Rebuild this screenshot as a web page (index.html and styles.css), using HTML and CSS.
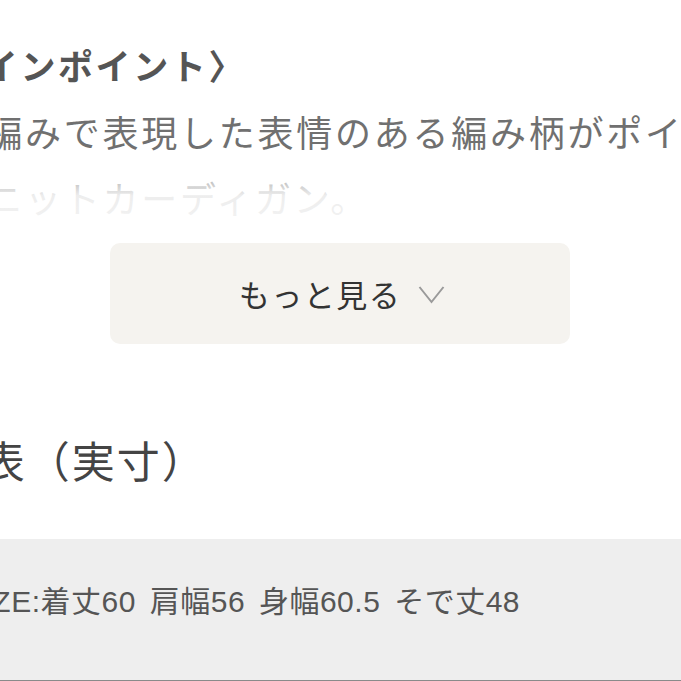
FILE: index.html
```html
<!DOCTYPE html>
<html lang="ja">
<head>
<meta charset="utf-8">
<title>商品説明</title>
<link rel="stylesheet" href="styles.css">
</head>
<body>
<main class="page">
  <section class="point">
    <h2 class="point-title">〈デザインポイント〉</h2>
    <p class="desc">アラン編みで表現した表情のある編み柄がポイ<br>ントのニットカーディガン。</p>
    <button class="more" type="button">
      <span class="more-label">もっと見る</span>
      <svg class="more-icon" width="27" height="19" viewBox="0 0 27 19" aria-hidden="true">
        <path d="M1.5 2 L13.5 17 L25.5 2" fill="none" stroke="#9a9a9a" stroke-width="2"/>
      </svg>
    </button>
  </section>
  <section class="size">
    <h2 class="size-title">サイズ表（実寸）</h2>
    <div class="size-box">SIZE:着丈60 肩幅56 身幅60.5 そで丈48</div>
  </section>
</main>
</body>
</html>
```

FILE: styles.css
```css
html, body {
  margin: 0;
  padding: 0;
  background: #ffffff;
}

body {
  width: 681px;
  height: 681px;
  overflow: hidden;
  font-family: "Noto Sans CJK JP", "Noto Sans", sans-serif;
}

.page {
  margin-left: -130px;
  width: 940px;
}

.point-title {
  margin: 0;
  padding-top: 32px;
  font-size: 35px;
  font-weight: 700;
  line-height: 66px;
  letter-spacing: 2.6px;
  color: #555555;
  white-space: nowrap;
}

.desc {
  position: relative;
  margin: 0;
  height: 132px;
  overflow: hidden;
  font-size: 36px;
  line-height: 66px;
  letter-spacing: 2.75px;
  color: #707070;
  white-space: nowrap;
}

.desc::after {
  content: "";
  position: absolute;
  left: 0;
  right: 0;
  bottom: 0;
  height: 76px;
  background: linear-gradient(rgba(255, 255, 255, 0) 0%, rgba(255, 255, 255, 0.88) 55%, rgba(255, 255, 255, 0.92) 100%);
}

.more {
  display: flex;
  align-items: center;
  justify-content: center;
  gap: 17px;
  margin: 13px auto 0;
  width: 460px;
  height: 101px;
  padding: 0 0 0 4px;
  border: 0;
  border-radius: 10px;
  background: #f5f3ef;
  font-family: inherit;
  cursor: pointer;
}

.more-label {
  font-size: 31px;
  letter-spacing: 1.5px;
  color: #333333;
}

.more-icon {
  display: block;
  margin-top: 2px;
}

.size-title {
  margin: 89px 0 0 -22px;
  font-size: 43px;
  font-weight: 400;
  line-height: 52px;
  letter-spacing: 2px;
  color: #444444;
  white-space: nowrap;
}

.size-box {
  margin-top: 54px;
  padding: 43px 0 58px 93px;
  background: #eeeeee;
  border-bottom: 2px solid #8a8a8a;
  font-family: "Liberation Sans", "Noto Sans CJK JP", sans-serif;
  font-size: 30px;
  line-height: 40px;
  letter-spacing: 0.5px;
  word-spacing: 5px;
  color: #555555;
  white-space: nowrap;
}
```
